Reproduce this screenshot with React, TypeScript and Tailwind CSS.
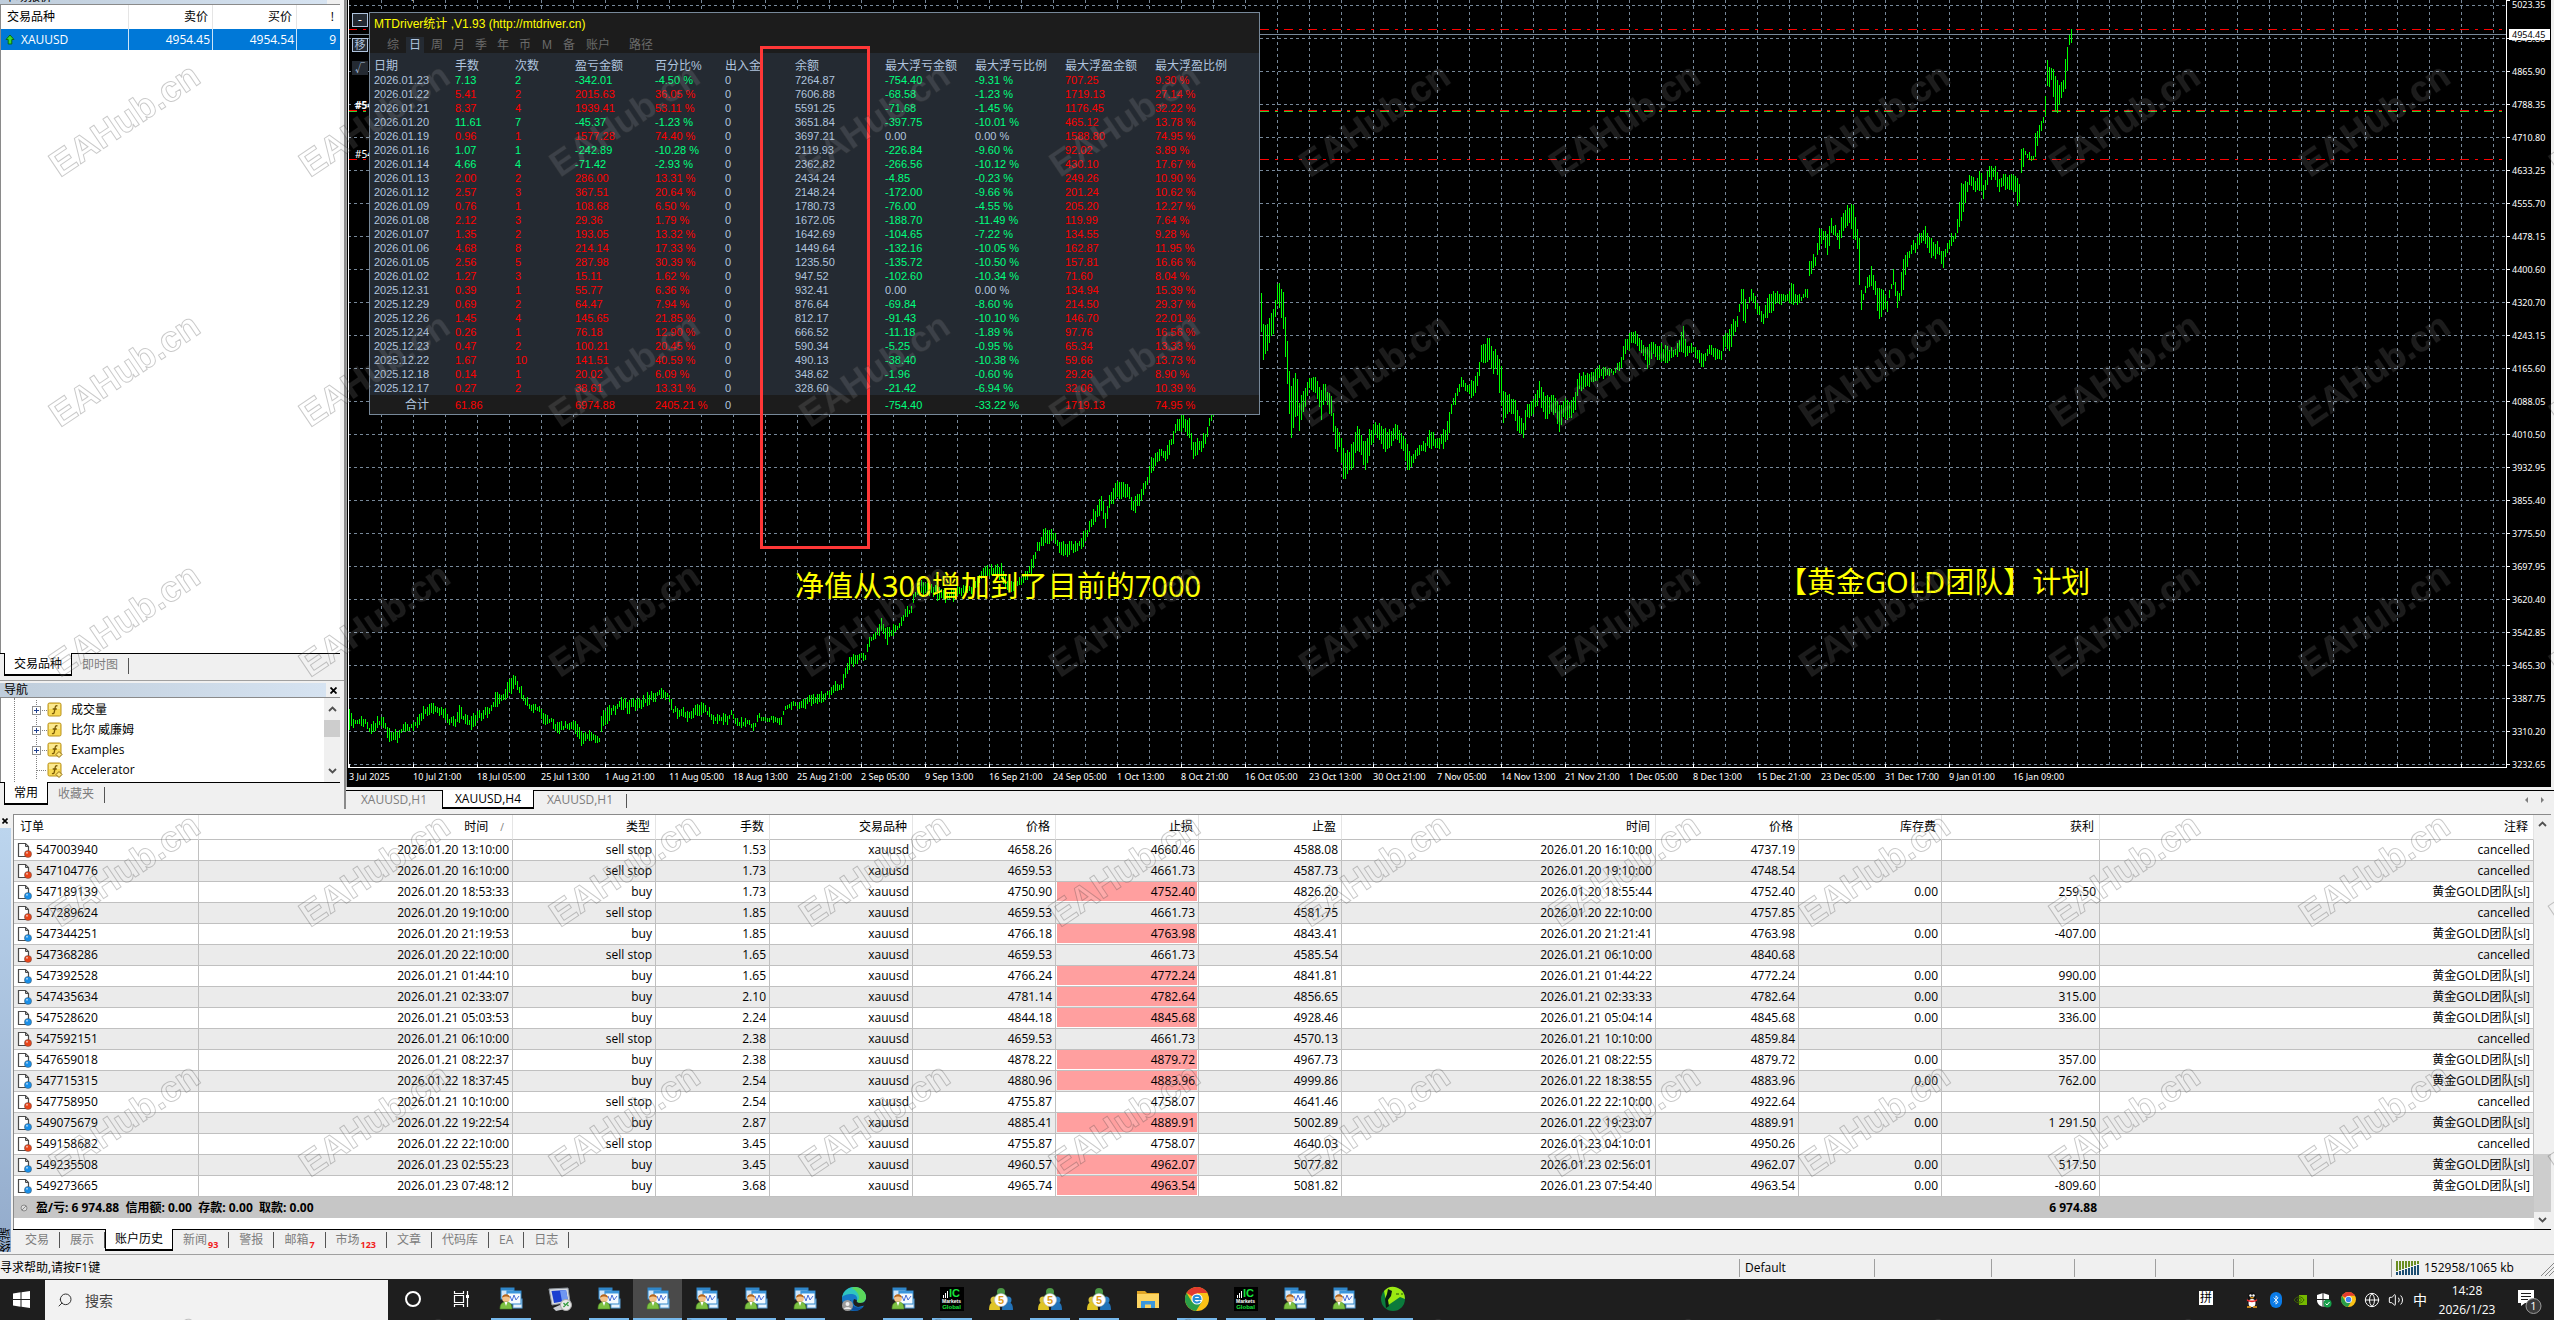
import React, { useState } from 'react';
import clsx from 'clsx';
import { Search, Volume2, Globe, Bluetooth } from 'lucide-react';

const UI_FONT = "font-['Open_Sans','Noto_Sans_CJK_SC',sans-serif]";
const CHART_FONT = "font-['Noto_Sans','Noto_Sans_CJK_SC',sans-serif]";
const STAT_FONT = "font-['Liberation_Sans','Noto_Sans_CJK_SC',sans-serif]";

type StatRow = [string, string, string, string, string, string, string, string, string, string];

// date, lots, trades, profit, profit %, balance, max floating loss, %, max floating profit, %
const STAT_ROWS: StatRow[] = [
  ['2026.01.23', '7.13', '2', '-342.01', '-4.50', '7264.87', '-754.40', '-9.31', '707.25', '9.30'],
  ['2026.01.22', '5.41', '2', '2015.63', '36.05', '7606.88', '-68.58', '-1.23', '1719.13', '27.14'],
  ['2026.01.21', '8.37', '4', '1939.41', '53.11', '5591.25', '-71.68', '-1.45', '1176.45', '32.22'],
  ['2026.01.20', '11.61', '7', '-45.37', '-1.23', '3651.84', '-397.75', '-10.01', '465.12', '13.78'],
  ['2026.01.19', '0.96', '1', '1577.28', '74.40', '3697.21', '0.00', '0.00', '1588.80', '74.95'],
  ['2026.01.16', '1.07', '1', '-242.89', '-10.28', '2119.93', '-226.84', '-9.60', '92.02', '3.89'],
  ['2026.01.14', '4.66', '4', '-71.42', '-2.93', '2362.82', '-266.56', '-10.12', '430.10', '17.67'],
  ['2026.01.13', '2.00', '2', '286.00', '13.31', '2434.24', '-4.85', '-0.23', '249.26', '10.90'],
  ['2026.01.12', '2.57', '3', '367.51', '20.64', '2148.24', '-172.00', '-9.66', '201.24', '10.62'],
  ['2026.01.09', '0.76', '1', '108.68', '6.50', '1780.73', '-76.00', '-4.55', '205.20', '12.27'],
  ['2026.01.08', '2.12', '3', '29.36', '1.79', '1672.05', '-188.70', '-11.49', '119.99', '7.64'],
  ['2026.01.07', '1.35', '2', '193.05', '13.32', '1642.69', '-104.65', '-7.22', '134.55', '9.28'],
  ['2026.01.06', '4.68', '8', '214.14', '17.33', '1449.64', '-132.16', '-10.05', '162.87', '11.95'],
  ['2026.01.05', '2.56', '5', '287.98', '30.39', '1235.50', '-135.72', '-10.50', '157.81', '16.66'],
  ['2026.01.02', '1.27', '3', '15.11', '1.62', '947.52', '-102.60', '-10.34', '71.60', '8.04'],
  ['2025.12.31', '0.39', '1', '55.77', '6.36', '932.41', '0.00', '0.00', '134.94', '15.39'],
  ['2025.12.29', '0.69', '2', '64.47', '7.94', '876.64', '-69.84', '-8.60', '214.50', '29.37'],
  ['2025.12.26', '1.45', '4', '145.65', '21.85', '812.17', '-91.43', '-10.10', '146.70', '22.01'],
  ['2025.12.24', '0.26', '1', '76.18', '12.90', '666.52', '-11.18', '-1.89', '97.76', '16.56'],
  ['2025.12.23', '0.47', '2', '100.21', '20.45', '590.34', '-5.25', '-0.95', '65.34', '13.33'],
  ['2025.12.22', '1.67', '10', '141.51', '40.59', '490.13', '-38.40', '-10.38', '59.66', '13.73'],
  ['2025.12.18', '0.14', '1', '20.02', '6.09', '348.62', '-1.96', '-0.60', '29.26', '8.90'],
  ['2025.12.17', '0.27', '2', '38.61', '13.31', '328.60', '-21.42', '-6.94', '32.06', '10.39'],
];

const STAT_HEADERS = ['日期', '手数', '次数', '盈亏金额', '百分比%', '出入金', '余额', '最大浮亏金额', '最大浮亏比例', '最大浮盈金额', '最大浮盈比例'];
const STAT_TABS = ['综', '日', '周', '月', '季', '年', '币', 'M', '备'];

interface Order {
  id: string;
  open: string;
  type: 'buy' | 'sell stop';
  lots: string;
  price: string;
  sl: string;
  tp: string;
  close: string;
  closePrice: string;
  profit?: string;
}

const ORDERS: Order[] = [
  { id: '547003940', open: '2026.01.20 13:10:00', type: 'sell stop', lots: '1.53', price: '4658.26', sl: '4660.46', tp: '4588.08', close: '2026.01.20 16:10:00', closePrice: '4737.19' },
  { id: '547104776', open: '2026.01.20 16:10:00', type: 'sell stop', lots: '1.73', price: '4659.53', sl: '4661.73', tp: '4587.73', close: '2026.01.20 19:10:00', closePrice: '4748.54' },
  { id: '547189139', open: '2026.01.20 18:53:33', type: 'buy', lots: '1.73', price: '4750.90', sl: '4752.40', tp: '4826.20', close: '2026.01.20 18:55:44', closePrice: '4752.40', profit: '259.50' },
  { id: '547289624', open: '2026.01.20 19:10:00', type: 'sell stop', lots: '1.85', price: '4659.53', sl: '4661.73', tp: '4581.75', close: '2026.01.20 22:10:00', closePrice: '4757.85' },
  { id: '547344251', open: '2026.01.20 21:19:53', type: 'buy', lots: '1.85', price: '4766.18', sl: '4763.98', tp: '4843.41', close: '2026.01.20 21:21:41', closePrice: '4763.98', profit: '-407.00' },
  { id: '547368286', open: '2026.01.20 22:10:00', type: 'sell stop', lots: '1.65', price: '4659.53', sl: '4661.73', tp: '4585.54', close: '2026.01.21 06:10:00', closePrice: '4840.68' },
  { id: '547392528', open: '2026.01.21 01:44:10', type: 'buy', lots: '1.65', price: '4766.24', sl: '4772.24', tp: '4841.81', close: '2026.01.21 01:44:22', closePrice: '4772.24', profit: '990.00' },
  { id: '547435634', open: '2026.01.21 02:33:07', type: 'buy', lots: '2.10', price: '4781.14', sl: '4782.64', tp: '4856.65', close: '2026.01.21 02:33:33', closePrice: '4782.64', profit: '315.00' },
  { id: '547528620', open: '2026.01.21 05:03:53', type: 'buy', lots: '2.24', price: '4844.18', sl: '4845.68', tp: '4928.46', close: '2026.01.21 05:04:14', closePrice: '4845.68', profit: '336.00' },
  { id: '547592151', open: '2026.01.21 06:10:00', type: 'sell stop', lots: '2.38', price: '4659.53', sl: '4661.73', tp: '4570.13', close: '2026.01.21 10:10:00', closePrice: '4859.84' },
  { id: '547659018', open: '2026.01.21 08:22:37', type: 'buy', lots: '2.38', price: '4878.22', sl: '4879.72', tp: '4967.73', close: '2026.01.21 08:22:55', closePrice: '4879.72', profit: '357.00' },
  { id: '547715315', open: '2026.01.22 18:37:45', type: 'buy', lots: '2.54', price: '4880.96', sl: '4883.96', tp: '4999.86', close: '2026.01.22 18:38:55', closePrice: '4883.96', profit: '762.00' },
  { id: '547758950', open: '2026.01.21 10:10:00', type: 'sell stop', lots: '2.54', price: '4755.87', sl: '4758.07', tp: '4641.46', close: '2026.01.22 22:10:00', closePrice: '4922.64' },
  { id: '549075679', open: '2026.01.22 19:22:54', type: 'buy', lots: '2.87', price: '4885.41', sl: '4889.91', tp: '5002.89', close: '2026.01.22 19:23:07', closePrice: '4889.91', profit: '1 291.50' },
  { id: '549158682', open: '2026.01.22 22:10:00', type: 'sell stop', lots: '3.45', price: '4755.87', sl: '4758.07', tp: '4640.03', close: '2026.01.23 04:10:01', closePrice: '4950.26' },
  { id: '549235508', open: '2026.01.23 02:55:23', type: 'buy', lots: '3.45', price: '4960.57', sl: '4962.07', tp: '5077.82', close: '2026.01.23 02:56:01', closePrice: '4962.07', profit: '517.50' },
  { id: '549273665', open: '2026.01.23 07:48:12', type: 'buy', lots: '3.68', price: '4965.74', sl: '4963.54', tp: '5081.82', close: '2026.01.23 07:54:40', closePrice: '4963.54', profit: '-809.60' },
];

const PRICES = ['5023.35', '4945.80', '4865.90', '4788.35', '4710.80', '4633.25', '4555.70', '4478.15', '4400.60', '4320.70', '4243.15', '4165.60', '4088.05', '4010.50', '3932.95', '3855.40', '3775.50', '3697.95', '3620.40', '3542.85', '3465.30', '3387.75', '3310.20', '3232.65'];

const TIMES = ['3 Jul 2025', '10 Jul 21:00', '18 Jul 05:00', '25 Jul 13:00', '1 Aug 21:00', '11 Aug 05:00', '18 Aug 13:00', '25 Aug 21:00', '2 Sep 05:00', '9 Sep 13:00', '16 Sep 21:00', '24 Sep 05:00', '1 Oct 13:00', '8 Oct 21:00', '16 Oct 05:00', '23 Oct 13:00', '30 Oct 21:00', '7 Nov 05:00', '14 Nov 13:00', '21 Nov 21:00', '1 Dec 05:00', '8 Dec 13:00', '15 Dec 21:00', '23 Dec 05:00', '31 Dec 17:00', '9 Jan 01:00', '16 Jan 09:00'];

// x, high, low of the turning points of the price series
const TURNS: [number, number, number][] = [
  [349, 708, 730], [354, 718, 725], [366, 717, 727], [370, 727, 737], [377, 717, 727], [385, 720, 730], [389, 728, 742], [396, 730, 743],
  [403, 723, 732], [412, 723, 730], [417, 717, 727], [423, 708, 718], [432, 703, 713], [438, 710, 718], [444, 707, 717], [449, 717, 727],
  [455, 717, 725], [459, 702, 725], [463, 713, 720], [470, 718, 730], [478, 710, 722], [489, 707, 717], [495, 693, 708], [504, 693, 700],
  [508, 677, 697], [515, 677, 687], [521, 688, 700], [529, 702, 710], [538, 705, 713], [544, 715, 725], [550, 717, 723], [555, 723, 733],
  [564, 723, 732], [572, 718, 727], [578, 723, 738], [582, 733, 748], [588, 730, 740], [599, 735, 743], [602, 708, 730], [613, 705, 715],
  [621, 698, 708], [627, 700, 713], [638, 698, 708], [650, 693, 705], [659, 688, 698], [667, 692, 700], [673, 705, 715], [687, 710, 722],
  [702, 703, 713], [713, 713, 722], [727, 715, 725], [731, 710, 717], [736, 717, 725], [753, 722, 730], [760, 713, 720], [782, 718, 726],
  [784, 702, 710], [799, 702, 710], [811, 695, 705], [825, 692, 700], [834, 683, 692], [841, 683, 692], [845, 667, 682], [851, 655, 667],
  [860, 653, 662], [865, 653, 663], [868, 637, 648], [875, 630, 640], [881, 618, 632], [886, 628, 645], [894, 625, 633], [900, 623, 632],
  [904, 608, 620], [910, 607, 615], [914, 590, 602], [920, 580, 593], [931, 583, 597], [948, 590, 602], [963, 587, 597], [974, 583, 593],
  [980, 570, 580], [989, 565, 578], [1001, 563, 580], [1009, 583, 593], [1023, 577, 585], [1032, 557, 573], [1037, 543, 553], [1045, 527, 543],
  [1055, 533, 543], [1061, 543, 558], [1075, 542, 553], [1086, 530, 543], [1092, 513, 527], [1102, 493, 513], [1105, 510, 527], [1109, 495, 510],
  [1116, 483, 497], [1129, 483, 500], [1132, 500, 516], [1141, 487, 503], [1146, 480, 490], [1150, 460, 477], [1161, 448, 460], [1165, 447, 463],
  [1172, 433, 447], [1176, 417, 430], [1182, 413, 430], [1190, 420, 437], [1192, 443, 462], [1201, 437, 450], [1207, 427, 440], [1210, 410, 423],
  [1225, 370, 390], [1259, 293, 330], [1261, 293, 330], [1263, 323, 360], [1268, 322, 347], [1273, 310, 335], [1278, 280, 300], [1283, 293, 333],
  [1286, 323, 367], [1288, 360, 403], [1291, 383, 437], [1296, 370, 413], [1299, 400, 433], [1304, 390, 410], [1310, 373, 387], [1316, 380, 395],
  [1321, 387, 420], [1324, 382, 397], [1331, 397, 420], [1335, 427, 450], [1339, 430, 450], [1344, 453, 487], [1348, 450, 467], [1352, 443, 473],
  [1356, 427, 450], [1360, 428, 450], [1364, 443, 475], [1368, 432, 457], [1375, 420, 437], [1383, 425, 450], [1388, 430, 450], [1396, 425, 440],
  [1403, 437, 452], [1407, 440, 468], [1411, 457, 469], [1416, 445, 457], [1424, 442, 453], [1429, 430, 447], [1436, 437, 450], [1444, 430, 447],
  [1448, 417, 440], [1451, 403, 413], [1457, 387, 400], [1462, 375, 387], [1468, 383, 397], [1474, 380, 397], [1478, 370, 387], [1480, 348, 367],
  [1489, 335, 360], [1492, 353, 378], [1496, 348, 367], [1501, 363, 410], [1503, 390, 423], [1508, 393, 410], [1515, 400, 420], [1518, 413, 435],
  [1523, 420, 440], [1527, 403, 420], [1533, 400, 413], [1539, 382, 400], [1545, 397, 420], [1554, 397, 413], [1559, 407, 430], [1564, 397, 417],
  [1569, 403, 422], [1574, 393, 413], [1579, 373, 390], [1587, 373, 387], [1597, 365, 380], [1605, 368, 378], [1613, 368, 373], [1620, 357, 373],
  [1625, 340, 357], [1632, 327, 343], [1640, 338, 353], [1647, 347, 368], [1653, 342, 357], [1666, 347, 365], [1674, 347, 357], [1683, 328, 353],
  [1686, 345, 357], [1693, 345, 355], [1702, 353, 367], [1709, 345, 357], [1721, 352, 362], [1723, 333, 350], [1730, 330, 350], [1732, 317, 343],
  [1737, 318, 327], [1741, 289, 303], [1744, 290, 330], [1746, 308, 317], [1750, 290, 300], [1753, 292, 303], [1757, 300, 317], [1763, 315, 323],
  [1767, 297, 317], [1773, 293, 310], [1780, 292, 303], [1787, 295, 303], [1791, 280, 303], [1797, 297, 307], [1803, 293, 300], [1807, 288, 297],
  [1809, 260, 277], [1815, 253, 267], [1819, 228, 250], [1823, 228, 238], [1827, 233, 257], [1831, 217, 237], [1835, 227, 240], [1839, 232, 248],
  [1842, 213, 233], [1849, 205, 223], [1853, 207, 237], [1857, 230, 250], [1859, 240, 287], [1861, 287, 310], [1863, 292, 302], [1867, 277, 288],
  [1871, 267, 287], [1875, 282, 297], [1879, 287, 323], [1883, 290, 310], [1887, 300, 310], [1893, 270, 283], [1897, 287, 307], [1899, 295, 305],
  [1902, 260, 293], [1907, 252, 270], [1910, 245, 255], [1917, 238, 252], [1921, 230, 246], [1925, 227, 243], [1928, 237, 252], [1933, 240, 260],
  [1937, 242, 255], [1943, 252, 267], [1946, 242, 257], [1950, 235, 247], [1954, 235, 245], [1957, 220, 233], [1961, 183, 222], [1967, 183, 193],
  [1970, 172, 185], [1975, 182, 195], [1980, 170, 193], [1983, 183, 197], [1988, 167, 180], [1995, 167, 178], [1998, 177, 192], [2003, 174, 190],
  [2009, 175, 188], [2015, 177, 192], [2018, 177, 212], [2020, 185, 193], [2021, 147, 175], [2025, 152, 158], [2034, 152, 160], [2035, 135, 157],
  [2040, 120, 135], [2044, 113, 123], [2046, 82, 117], [2047, 62, 88], [2051, 65, 83], [2056, 77, 118], [2058, 85, 112], [2060, 85, 97],
  [2063, 78, 95], [2066, 50, 88], [2068, 38, 53], [2070, 29, 45], [2072, 30, 42],
];

const buildBars = (): string => {
  let path = '';
  let i = 0;
  let seed = 7;
  for (let x = 349; x <= 2071; x += 2) {
    while (i < TURNS.length - 2 && TURNS[i + 1][0] < x) i++;
    const [x0, h0, l0] = TURNS[i];
    const [x1, h1, l1] = TURNS[i + 1];
    const t = Math.min(1, Math.max(0, (x - x0) / (x1 - x0)));
    seed = (seed * 16807) % 2147483647;
    const a = (seed % 100) / 100;
    const b = ((seed >> 8) % 100) / 100;
    const high = Math.round(h0 + (h1 - h0) * t + a * 6 - 2);
    const low = Math.round(l0 + (l1 - l0) * t + b * 6 - 4);
    path += `M${x}.5 ${high}V${Math.max(low, high + 4)}`;
  }
  return path;
};

const BARS = buildBars();

const ChartDrawing: React.FC = () => (
  <svg viewBox="347 0 2160 768" preserveAspectRatio="none" shapeRendering="crispEdges" className="block w-full h-[768px]">
    <g stroke="#778899" strokeDasharray="3 3">
      {Array.from({ length: 24 }, (_, k) => (
        <line key={`h${k}`} x1="348" x2="2506" y1={5.5 + 33 * k} y2={5.5 + 33 * k} />
      ))}
      {Array.from({ length: 67 }, (_, k) => (
        <line key={`v${k}`} x1={381.5 + 32 * k} x2={381.5 + 32 * k} y1="0" y2="767" />
      ))}
    </g>
    <line x1="348" x2="2506" y1="34.5" y2="34.5" stroke="#778899" />
    <g stroke="#ff0000" strokeDasharray="9 6 3 6">
      <line x1="348" x2="2506" y1="29.5" y2="29.5" />
      <line x1="348" x2="2506" y1="110.5" y2="110.5" />
      <line x1="348" x2="2506" y1="159.5" y2="159.5" />
      <line x1="348" x2="2506" y1="111.5" y2="111.5" stroke="#32cd32" />
    </g>
    <path d={BARS} stroke="#00ff00" />
    <path d="M348.5 0V767.5H2506.5V0" fill="none" stroke="#ffffff" />
    {Array.from({ length: 34 }, (_, k) => (
      <line key={k} x1={349.5 + 64 * k} x2={349.5 + 64 * k} y1="764" y2="768" stroke="#ffffff" />
    ))}
  </svg>
);

const tone = (value: string): string => {
  if (value.startsWith('-')) return 'text-[#00ff7f]';
  if (value === '0.00') return 'text-[#b0c4de]';
  return 'text-[#ff0000]';
};

const StatsPanel: React.FC = () => {
  const [tab, setTab] = useState<string>('日');

  return (
    <section className={clsx('absolute left-[22px] top-[12px] w-[891px] border border-[#778899] bg-[#242a32] text-[#b0c4de]', STAT_FONT)}>
      <div className="bg-[#1c1c1c]">
        <h2 className="h-6 pl-1 pt-[3px] text-[12px] leading-4 text-[#ffff00]">MTDriver统计 ,V1.93 (http://mtdriver.cn)</h2>
        <div className="flex pl-[14px] text-[12px] leading-4 text-[#6a6a6a]">
          {STAT_TABS.map(name => (
            <button
              key={name}
              onClick={() => setTab(name)}
              className={clsx('w-[18px] mr-1 h-4', tab === name && 'bg-[#242a32] text-[#b0c4de]')}
            >
              {name}
            </button>
          ))}
          <button className="ml-[4px] w-6">账户</button>
          <button className="ml-[19px] w-6">路径</button>
        </div>
      </div>
      <table className="w-full table-fixed border-separate border-spacing-0 text-left text-[11px] leading-[14px] whitespace-nowrap">
        <colgroup>
          <col className="w-[85px]" />
          <col className="w-[60px]" />
          <col className="w-[60px]" />
          <col className="w-[80px]" />
          <col className="w-[70px]" />
          <col className="w-[70px]" />
          <col className="w-[90px]" />
          <col className="w-[90px]" />
          <col className="w-[90px]" />
          <col className="w-[90px]" />
          <col />
        </colgroup>
        <thead>
          <tr className="h-5 align-bottom text-[12px]">
            {STAT_HEADERS.map((name, i) => (
              <th key={name} className={clsx('p-0 font-normal', i === 0 && 'pl-1')}>{name}</th>
            ))}
          </tr>
        </thead>
        <tbody>
          {STAT_ROWS.map(row => (
            <tr key={row[0]} className="h-[14px]">
              <td className="p-0 pl-1">{row[0]}</td>
              <td className={clsx('p-0', tone(row[3]))}>{row[1]}</td>
              <td className={clsx('p-0', tone(row[3]))}>{row[2]}</td>
              <td className={clsx('p-0', tone(row[3]))}>{row[3]}</td>
              <td className={clsx('p-0', tone(row[3]))}>{row[4]} %</td>
              <td className="p-0">0</td>
              <td className="p-0">{row[5]}</td>
              <td className={clsx('p-0', tone(row[6]))}>{row[6]}</td>
              <td className={clsx('p-0', tone(row[6]))}>{row[7]} %</td>
              <td className="p-0 text-[#ff0000]">{row[8]}</td>
              <td className="p-0 text-[#ff0000]">{row[9]} %</td>
            </tr>
          ))}
        </tbody>
        <tfoot>
          <tr className="h-[19px] bg-[#1c1c1c] text-[#ff0000]">
            <td className="p-0 pl-[35px] text-[12px] text-[#b0c4de]">合计</td>
            <td className="p-0">61.86</td>
            <td className="p-0" />
            <td className="p-0">6974.88</td>
            <td className="p-0">2405.21 %</td>
            <td className="p-0 text-[#b0c4de]">0</td>
            <td className="p-0" />
            <td className="p-0 text-[#00ff7f]">-754.40</td>
            <td className="p-0 text-[#00ff7f]">-33.22 %</td>
            <td className="p-0">1719.13</td>
            <td className="p-0">74.95 %</td>
          </tr>
        </tfoot>
      </table>
    </section>
  );
};

const ChartWindow: React.FC = () => (
  <main className={clsx('flex-1 min-w-0 flex flex-col', CHART_FONT)}>
    <div className="relative flex overflow-hidden bg-black mr-[3px] border-l border-[#a0a0a0] text-white">
      <div className="flex-1 min-w-0">
        <ChartDrawing />
        <div className="flex h-[19px] overflow-hidden pl-[2px] pt-px text-[9px] leading-4 whitespace-nowrap">
          {TIMES.map(t => (
            <span key={t} className="w-16 shrink-0">{t}</span>
          ))}
        </div>
      </div>
      <div className="w-[44px] text-[9px] leading-[10px]">
        {PRICES.map((p, i) => (
          <div key={p} className={clsx('relative flex pl-[5px]', i === 0 ? 'h-[22px] items-start' : 'h-[33px] items-center')}>
            <span className="absolute left-0 w-[3px] border-t border-white" />
            {p}
            {i === 1 && <span className="absolute left-[2px] top-[7px] w-[41px] pl-[3px] bg-white text-black leading-[11px]">4954.45</span>}
          </div>
        ))}
      </div>

      <div className="absolute left-[7px] -top-3 flex gap-[5px] text-[11px] leading-4">
        <span className="text-[9px]">▼</span>
        <span>XAUUSD,H4&nbsp; 4955.55 4967.24 4950.06 4954.45</span>
      </div>
      <button aria-label="收起" className="absolute left-[5px] top-[13px] w-4 h-[14px] border border-[#b0c4de] bg-[#242a32] text-[12px] leading-[10px] text-white">-</button>
      <button className="absolute left-[5px] top-[38px] w-4 h-[14px] border border-[#b0c4de] bg-[#242a32] text-[11px] leading-[12px] text-[#b0c4de]">移</button>
      <button className="absolute left-[5px] top-[61px] w-4 h-[14px] bg-[#242a32] text-[10px] leading-[14px] text-[#b0c4de]">√</button>
      <span className="absolute left-[8px] top-[98px] text-[10px] font-bold leading-[14px]">#54</span>
      <span className="absolute left-[8px] top-[147px] text-[10px] leading-[14px]">#54</span>

      <StatsPanel />
      <div className="absolute left-[413px] top-[46px] w-[110px] h-[503px] border-[3px] border-[#ff3737]" />
      <p className="absolute left-[448px] top-[566px] text-[29px] leading-10 text-[#ffff00] whitespace-nowrap">净值从300增加到了目前的7000</p>
      <p className="absolute left-[1431px] top-[562px] text-[29px] leading-10 text-[#ffff00] whitespace-nowrap">【黄金GOLD团队】计划</p>
    </div>

    <nav className={clsx('flex items-start justify-between h-[22px] pt-[3px] bg-[#f0f0f0] text-[12px] leading-[18px] text-[#7d7d7d]', UI_FONT)}>
      <div className="flex flex-1 h-[19px] border-t border-black">
        <button className="w-[96px] text-center">XAUUSD,H1</button>
        <button className="-mt-px w-[92px] border-x border-b-2 border-black bg-white text-black text-center">XAUUSD,H4</button>
        <button className="w-[92px] text-center">XAUUSD,H1</button>
        <span className="mt-[3px] h-[14px] border-l border-[#555]" />
      </div>
      <div className="flex h-[19px] items-center gap-[11px] border-t border-black pr-2 text-[#7d7d7d]">
        <svg width="6" height="8" viewBox="0 0 6 8"><path d="M5 1V7L2 4Z" fill="currentColor" /></svg>
        <svg width="6" height="8" viewBox="0 0 6 8"><path d="M1 1V7L4 4Z" fill="currentColor" /></svg>
      </div>
    </nav>
  </main>
);

const FunctionIcon: React.FC<{ custom?: boolean }> = ({ custom }) => (
  <svg width="16" height="16" viewBox="0 0 16 16">
    <rect x="1" y="1" width="13" height="13" rx="1.5" fill="#f7d955" stroke="#b8901c" />
    <rect x="2" y="2" width="11" height="5" fill="#fdf0a8" opacity=".7" />
    <path d="M10.5 4C8.500 3 8.300 5 8 6.500L7.300 10C7 11.500 6.300 12 5 11.400M5.700 7H9.800" fill="none" stroke="#7a5a05" strokeWidth="1.300" />
    {custom && <path d="M12 9.500L15 12.500L12 15.500L9 12.500Z" fill="#ffe680" stroke="#8d6c10" />}
  </svg>
);

const Chevron: React.FC<{ down?: boolean }> = ({ down }) => (
  <svg width="9" height="6" viewBox="0 0 9 6" className="block">
    <path d={down ? 'M1 1L4.500 4.500L8 1' : 'M1 5L4.500 1.500L8 5'} fill="none" stroke="#505050" strokeWidth="1.800" />
  </svg>
);

const TREE = [
  { name: '成交量', custom: false, node: true },
  { name: '比尔 威廉姆', custom: false, node: true },
  { name: 'Examples', custom: true, node: true },
  { name: 'Accelerator', custom: true, node: false },
];

const Sidebar: React.FC = () => (
  <aside className="w-[346px] shrink-0 flex flex-col bg-[#f0f0f0] border-r-2 border-[#8a8a8a] text-[12px]">
    <section className="flex-1 flex flex-col pr-[4px]">
      <div className="flex h-1 overflow-hidden items-end mr-[13px] bg-linear-to-r from-[#bfcddb] to-[#d6e3f1] pl-1 leading-[14px]">市场报价</div>
      <div className="flex-1 border-l border-t border-[#8a8a8a] bg-white">
        <table className="w-full table-fixed border-separate border-spacing-0 text-right">
          <colgroup>
            <col className="w-[128px]" />
            <col className="w-[84px]" />
            <col className="w-[84px]" />
            <col />
          </colgroup>
          <thead>
            <tr className="h-6">
              <th className="border-r border-[#e5e5e5] p-0 pl-1.5 text-left font-normal">交易品种</th>
              <th className="border-r border-[#e5e5e5] p-0 pr-1 font-normal">卖价</th>
              <th className="border-r border-[#e5e5e5] p-0 pr-1 font-normal">买价</th>
              <th className="p-0 pr-1.5 font-normal">!</th>
            </tr>
          </thead>
          <tbody>
            <tr className="h-[21px] bg-[#0078d7] text-white">
              <td className="border-r border-[#cce4f7] p-0 pl-1">
                <div className="flex items-center gap-1.5">
                  <svg width="10" height="11" viewBox="0 0 10 11"><path d="M5 1L9 5.500H6.800V10H3.200V5.500H1Z" fill="#3ddc2e" stroke="#0b6a12" /></svg>
                  XAUUSD
                </div>
              </td>
              <td className="border-r border-[#cce4f7] p-0 pr-0.5">4954.45</td>
              <td className="border-r border-[#cce4f7] p-0 pr-0.5">4954.54</td>
              <td className="p-0 pr-1">9</td>
            </tr>
          </tbody>
        </table>
      </div>
      <nav className="flex h-[27px] items-start border-t border-black pl-1 text-[#7d7d7d]">
        <button className="-mt-px h-[23px] w-[68px] border-x border-b-2 border-black bg-white text-black">交易品种</button>
        <button className="h-[22px] w-[56px]">即时图</button>
        <span className="mt-1 h-4 border-l border-[#555]" />
      </nav>
    </section>

    <section className="border-t border-[#a0a0a0] pt-[2px] pr-[4px]">
      <div className="flex items-center">
        <h2 className="flex-1 pl-1 bg-linear-to-r from-[#bfcddb] to-[#d6e3f1] leading-[14px]">导航</h2>
        <button aria-label="关闭" className="flex w-[14px] justify-center">
          <svg width="7" height="7" viewBox="0 0 7 7"><path d="M.5 .5L6.500 6.500M6.500 .5L.5 6.500" stroke="#000" strokeWidth="1.800" /></svg>
        </button>
      </div>
      <div className="flex border-l border-t border-[#8a8a8a] bg-white">
        <div className="flex-1 ml-[13px] border-l border-dotted border-[#808080] py-[2px]">
          {TREE.map(item => (
            <div key={item.name} className="flex h-5 items-center">
              <svg width="32" height="20" viewBox="0 0 32 20">
                <path d={item.node ? 'M21.500 0V20M27 10.500H32' : 'M21.500 0V20M22 10.500H32'} stroke="#808080" strokeDasharray="1 1" />
                {item.node && (
                  <>
                    <rect x="17.500" y="6.500" width="8" height="8" fill="#fff" stroke="#919191" />
                    <path d="M19 10.500H24M21.500 8V13" stroke="#1f3f8f" />
                  </>
                )}
              </svg>
              <FunctionIcon custom={item.custom} />
              <span className="pl-2">{item.name}</span>
            </div>
          ))}
        </div>
        <div className="flex w-4 flex-col items-center bg-[#f0f0f0] py-2">
          <Chevron />
          <div className="mt-[8px] h-[17px] w-full bg-[#cdcdcd]" />
          <div className="flex-1" />
          <Chevron down />
        </div>
      </div>
      <nav className="flex h-[27px] items-start border-t border-black pl-1 text-[#7d7d7d]">
        <button className="-mt-px h-[23px] w-[44px] border-x border-b-2 border-black bg-white text-black">常用</button>
        <button className="h-[22px] w-[56px]">收藏夹</button>
        <span className="mt-1 h-4 border-l border-[#555]" />
      </nav>
    </section>
  </aside>
);

const DocIcon: React.FC<{ color: string }> = ({ color }) => (
  <svg width="15" height="16" viewBox="0 0 15 16" className="shrink-0">
    <path d="M1.500 1.500H8.500L11.500 4.500V14.500H1.500Z" fill="#fff" stroke="#4a4a4a" strokeWidth="1.200" />
    <path d="M8.500 1.500V4.500H11.500" fill="none" stroke="#4a4a4a" />
    <circle cx="11" cy="12" r="3.600" fill={color} stroke="#444" strokeWidth=".4" />
    <circle cx="10" cy="10.800" r="1" fill="#fff" opacity=".6" />
  </svg>
);

const ORDER_HEADERS = ['类型', '手数', '交易品种', '价格', '止损', '止盈', '时间', '价格', '库存费', '获利', '注释'];
const TERMINAL_TABS = [
  { name: '交易' },
  { name: '展示' },
  { name: '账户历史' },
  { name: '新闻', count: '93' },
  { name: '警报' },
  { name: '邮箱', count: '7' },
  { name: '市场', count: '123' },
  { name: '文章' },
  { name: '代码库' },
  { name: 'EA' },
  { name: '日志' },
];

const CELL = 'border-r border-b border-[#c0c0c0] p-0 pr-[3px]';

const Terminal: React.FC = () => {
  const [tab, setTab] = useState<string>('账户历史');

  return (
    <section className="flex flex-1 bg-[#f0f0f0] pt-[5px] pr-[3px] text-[12px] leading-[18px]">
      <div className="flex w-[13px] shrink-0 flex-col">
        <button aria-label="关闭" className="flex h-[14px] w-[10px] items-center justify-center">
          <svg width="6" height="6" viewBox="0 0 6 6"><path d="M.5 .5L5.500 5.500M5.500 .5L.5 5.500" stroke="#000" strokeWidth="1.600" /></svg>
        </button>
        <div className="flex mr-[2px] mb-[2px] flex-1 items-end justify-center bg-linear-to-b from-[#bcd5ee] to-[#93abcb]">
          <h2 className="-rotate-180 [writing-mode:vertical-rl] text-[12px] leading-[11px]">终端</h2>
        </div>
      </div>
      <div className="flex-1 min-w-0">
        <div className="flex border-l border-t border-[#8a8a8a] bg-white">
          <table className="flex-1 table-fixed border-separate border-spacing-0 mb-[11px] w-full text-right whitespace-nowrap">
            <colgroup>
              <col className="w-[185px]" />
              <col className="w-[314px]" />
              <col className="w-[143px]" />
              <col className="w-[114px]" />
              <col className="w-[143px]" />
              <col className="w-[143px]" />
              <col className="w-[143px]" />
              <col className="w-[143px]" />
              <col className="w-[314px]" />
              <col className="w-[143px]" />
              <col className="w-[143px]" />
              <col className="w-[158px]" />
              <col />
            </colgroup>
            <thead>
              <tr className="h-[25px]">
                <th className="border-r border-b border-r-[#e5e5e5] border-b-[#c0c0c0] p-0 pl-1.5 text-left font-normal">订单</th>
                <th className="border-r border-b border-r-[#e5e5e5] border-b-[#c0c0c0] p-0 pr-2 font-normal">
                  时间<span className="pl-3 text-[10px] text-[#777]">/</span>
                </th>
                {ORDER_HEADERS.map((name, i) => (
                  <th key={i} className="border-r border-b border-r-[#e5e5e5] border-b-[#c0c0c0] p-0 pr-[5px] font-normal">{name}</th>
                ))}
              </tr>
            </thead>
            <tbody>
              {ORDERS.map(order => (
                <tr key={order.id} className="h-[21px] odd:bg-white even:bg-[#ebebeb]">
                  <td className={CELL}>
                    <div className="flex items-center gap-1 pl-[3px]">
                      <DocIcon color={order.type === 'buy' ? '#1a8fe8' : '#e8451a'} />
                      {order.id}
                    </div>
                  </td>
                  <td className={CELL}>{order.open}</td>
                  <td className={CELL}>{order.type}</td>
                  <td className={CELL}>{order.lots}</td>
                  <td className={CELL}>xauusd</td>
                  <td className={CELL}>{order.price}</td>
                  <td className="border-r border-b border-[#c0c0c0] p-0 px-px">
                    <div className={clsx('mb-px h-[19px] pr-[2px] leading-5', order.profit && 'bg-[#ff9f9f]')}>{order.sl}</div>
                  </td>
                  <td className={CELL}>{order.tp}</td>
                  <td className={CELL}>{order.close}</td>
                  <td className={CELL}>{order.closePrice}</td>
                  <td className={CELL}>{order.profit && '0.00'}</td>
                  <td className={CELL}>{order.profit}</td>
                  <td className={CELL}>{order.profit ? '黄金GOLD团队[sl]' : 'cancelled'}</td>
                </tr>
              ))}
            </tbody>
            <tfoot>
              <tr className="h-[21px] bg-[#c6c6c6] font-bold">
                <td colSpan={11} className="p-0 pl-1.5 text-left">
                  <div className="flex items-center gap-[8px]">
                    <svg width="8" height="8" viewBox="0 0 8 8"><circle cx="4" cy="4" r="3" fill="#ddd" stroke="#8a8a8a" /><path d="M2 6L6 2" stroke="#8a8a8a" /></svg>
                    <span>盈/亏: 6 974.88&nbsp; 信用额: 0.00&nbsp; 存款: 0.00&nbsp; 取款: 0.00</span>
                  </div>
                </td>
                <td className="p-0 pr-[3px]">6 974.88</td>
                <td className="p-0" />
              </tr>
            </tfoot>
          </table>
          <div className="flex w-[17px] shrink-0 flex-col items-center bg-[#f0f0f0] py-[6px]">
            <Chevron />
            <div className="flex-1" />
            <div className="mb-[5px] h-[58px] w-full bg-[#cdcdcd]" />
            <Chevron down />
          </div>
        </div>
        <nav className="flex h-[23px] items-start border-t border-black pl-[2px] text-[#7d7d7d]">
          {TERMINAL_TABS.map(item =>
            item.name === tab ? (
              <button key={item.name} className="-mt-px h-[22px] border-x border-b-2 border-black bg-white px-[9px] text-black">{item.name}</button>
            ) : (
              <button key={item.name} onClick={() => setTab(item.name)} className="relative mt-[2px] h-4 border-r border-[#555] px-[10px] leading-[14px] whitespace-nowrap last:pr-[10px]">
                {item.name}
                {item.count && <span className="relative top-1 pl-px text-[9px] font-bold text-[#f02020]">{item.count}</span>}
              </button>
            )
          )}
        </nav>
      </div>
    </section>
  );
};

const StatusBar: React.FC = () => (
  <footer className="flex h-[25px] items-center border-t border-[#a0a0a0] bg-[#f0f0f0] pt-[2px] text-[12px]">
    <span className="flex-1">寻求帮助,请按F1键</span>
    <span className="w-[135px] border-l border-[#a0a0a0] pl-[5px]">Default</span>
    <span className="h-[18px] w-[117px] border-l border-[#a0a0a0]" />
    <span className="h-[18px] w-[83px] border-l border-[#a0a0a0]" />
    <span className="h-[18px] w-[81px] border-l border-[#a0a0a0]" />
    <span className="h-[18px] w-[78px] border-l border-[#a0a0a0]" />
    <span className="h-[18px] w-[80px] border-l border-[#a0a0a0]" />
    <span className="h-[18px] w-[78px] border-l border-[#a0a0a0]" />
    <span className="flex w-[149px] items-center gap-1 border-l border-[#a0a0a0] pl-1">
      <svg width="24" height="14" viewBox="0 0 24 14">
        {Array.from({ length: 8 }, (_, i) => (
          <g key={i}>
            <rect x={i * 3} y="0" width="2" height={10 - i} fill="#6b8e23" />
            <rect x={i * 3} y={11 - i} width="2" height={3 + i} fill="#1d4f73" />
          </g>
        ))}
      </svg>
      152958/1065 kb
    </span>
    <svg width="14" height="16" viewBox="0 0 14 16"><path d="M1 16L14 3M5 16L14 7M9 16L14 11" stroke="#888" /></svg>
  </footer>
);

const MetaTraderIcon: React.FC = () => (
  <svg width="24" height="24" viewBox="0 0 24 24">
    <rect x="2" y="1" width="13" height="11" fill="#cfe6fa" stroke="#2f86c9" />
    <rect x="2" y="1" width="13" height="2.500" fill="#2f86c9" />
    <rect x="14" y="12" width="9" height="9" fill="#e6f2fc" stroke="#5aa0d8" />
    <rect x="8" y="4" width="14" height="13" fill="#f4faff" stroke="#2f86c9" />
    <rect x="8" y="4" width="14" height="2.500" fill="#3c96dc" />
    <path d="M11 9L13 14L15 8L17 13L20 9" fill="none" stroke="#4a6fd8" />
    <circle cx="7" cy="11.500" r="3.800" fill="#f5c38a" />
    <path d="M3 11C3 6 11 6 11 11C9 9 5 9 3 11Z" fill="#b5651d" />
    <path d="M1 22C1 16.500 3.500 15 7 15C10.500 15 13 16.500 13 22Z" fill="#7cc142" stroke="#4c8a22" strokeWidth=".6" />
    <path d="M5.500 15L7 19L8.500 15Z" fill="#fff" />
  </svg>
);

const RemoteIcon: React.FC = () => (
  <svg width="24" height="24" viewBox="0 0 24 24">
    <path d="M1 2L20 1L22 15L4 18Z" fill="#d7dbe0" stroke="#8d949c" />
    <path d="M3.500 4L18 3L20 13.500L6 16Z" fill="#1b3fd0" />
    <path d="M12 3.500L18 3L20 13.500L14 14.500Z" fill="#6f97f2" />
    <path d="M5 21L12 18L17 22L8 24Z" fill="#c9cdd2" />
    <circle cx="18" cy="18" r="5.500" fill="#e9e9e9" stroke="#a9a9a9" />
    <path d="M15.500 16L17.500 18L15.500 20M20.500 15L18.500 17L20.500 19" fill="none" stroke="#2f9a3c" strokeWidth="1.300" />
  </svg>
);

const EdgeIcon: React.FC = () => (
  <svg width="26" height="26" viewBox="0 0 26 26">
    <circle cx="13" cy="13" r="12" fill="#1679c9" />
    <path d="M1 12C2 5 7 1 13 1C20 1 25 6 25 11C25 15 22 17 19 17C16 17 15 15.500 16 14C17 12 15 8 11 8C6 8 2 9 1 12Z" fill="#2fc5c0" />
    <path d="M14 1C20 1 25 6 25 11C25 15 22 17 19 17C17 17 16 16 16 15C20 13 18 5 10 2Z" fill="#5bd75b" />
    <path d="M16 14C15 15.500 16 17 19 17C22 17 24 16 25 13L26 19L17 21C13 20 11 17 13 13Z" fill="#1e1e1e" />
    <path d="M10 14C10 20 15 23 22 21C19 25 13 26 9 23C5 20 6 15 10 14Z" fill="#0c4f9e" />
    <circle cx="6.500" cy="19.500" r="5.500" fill="#9b9b9b" />
    <circle cx="6.500" cy="18" r="2" fill="#eee" />
    <path d="M3 23C3 20.500 10 20.500 10 23Z" fill="#eee" />
  </svg>
);

const IcMarketsIcon: React.FC = () => (
  <div className="flex h-6 w-6 flex-col items-center bg-black font-['Liberation_Sans',sans-serif] font-bold">
    <div className="flex h-[11px] items-end gap-px">
      <span className="h-[3px] w-px bg-white" />
      <span className="h-[5px] w-px bg-white" />
      <span className="h-[7px] w-px bg-white" />
      <span className="text-[11px] leading-[10px] text-[#17e63b]">IC</span>
    </div>
    <span className="text-[5px] leading-[6px] text-white">Markets</span>
    <span className="text-[6px] leading-[6px] text-[#17e63b]">Global</span>
  </div>
);

const Mt5Icon: React.FC = () => (
  <svg width="26" height="26" viewBox="0 0 26 26">
    <circle cx="13" cy="6" r="4" fill="#4d9a47" />
    <path d="M6 16C6 9 9 7 13 7C17 7 20 9 20 16Z" fill="#3f8f3c" />
    <circle cx="6" cy="14" r="3.500" fill="#d8c43a" />
    <path d="M1 24C1 18 3 16 7 16C10 16 12 18 12 24Z" fill="#e0c526" />
    <circle cx="20" cy="14" r="3.500" fill="#2b7fc4" />
    <path d="M14 24C14 18 16 16 19 16C23 16 25 18 25 24Z" fill="#2272b8" />
    <circle cx="13" cy="14" r="6.500" fill="#fff" stroke="#b9b9b9" strokeWidth=".6" />
    <text x="13" y="18" textAnchor="middle" fontSize="11" fontWeight="bold" fill="#e09a1a" fontFamily="Liberation Sans, sans-serif">5</text>
  </svg>
);

const FolderIcon: React.FC = () => (
  <svg width="24" height="24" viewBox="0 0 24 24">
    <path d="M1 4H9L11 6H23V21H1Z" fill="#e0a526" />
    <rect x="1" y="7" width="22" height="14" fill="#fcd462" />
    <path d="M5 21V14H19V21H15V17.500H9V21Z" fill="#3b97dd" />
  </svg>
);

const ChromeIcon: React.FC<{ size: number; badge?: boolean }> = ({ size, badge }) => (
  <svg width={size} height={size} viewBox="0 0 24 24">
    <circle cx="12" cy="12" r="12" fill="#fbc116" />
    <path d="M12 12L1.600 6A12 12 0 0 1 22.400 6H12Z" fill="#e33b2e" />
    <path d="M12 12L7 15L1.600 6A12 12 0 0 0 11 24L17 14.500Z" fill="#2a9e48" />
    <circle cx="12" cy="12" r="5.600" fill="#fff" />
    {badge ? (
      <path d="M8.500 12H15.500C15.500 7.500 8.500 7.500 8.500 12C8.500 16 13.500 16.500 15 14" fill="none" stroke="#2a8fd6" strokeWidth="2" />
    ) : (
      <circle cx="12" cy="12" r="4.400" fill="#3f83f2" />
    )}
  </svg>
);

const GreenIcon: React.FC = () => (
  <svg width="26" height="26" viewBox="0 0 26 26">
    <circle cx="13" cy="13" r="12" fill="#0b7a3c" />
    <path d="M25 13A12 12 0 0 0 4 5L7 20L20 11Z" fill="#9bea12" />
    <path d="M8 3L12 5L11 10L8 14L9 20L6 22L5 13L7 8Z" fill="#0a1a12" />
    <path d="M16 8H19M21 8H23" stroke="#25500a" />
  </svg>
);

const CortanaIcon: React.FC = () => (
  <svg width="18" height="18" viewBox="0 0 18 18"><circle cx="9" cy="9" r="7" fill="none" stroke="#fff" strokeWidth="2" /></svg>
);

const TaskViewIcon: React.FC = () => (
  <svg width="18" height="18" viewBox="0 0 18 18">
    <path d="M1.500 1V3.500H10.500V1M1.500 17V14.500H10.500V17M1.500 5.500H10.500V12.500H1.500ZM14.500 1V17" fill="none" stroke="#fff" strokeWidth="1.200" />
    <rect x="13" y="5" width="3" height="3" fill="#fff" />
  </svg>
);

const APPS: { label: string; icon: React.ReactNode; open?: boolean; active?: boolean }[] = [
  { label: 'Cortana', icon: <CortanaIcon /> },
  { label: '任务视图', icon: <TaskViewIcon /> },
  { label: 'MetaTrader', icon: <MetaTraderIcon />, open: true },
  { label: '远程桌面', icon: <RemoteIcon /> },
  { label: 'MetaTrader', icon: <MetaTraderIcon />, open: true },
  { label: 'MetaTrader', icon: <MetaTraderIcon />, open: true, active: true },
  { label: 'MetaTrader', icon: <MetaTraderIcon />, open: true },
  { label: 'MetaTrader', icon: <MetaTraderIcon />, open: true },
  { label: 'MetaTrader', icon: <MetaTraderIcon />, open: true },
  { label: 'Edge', icon: <EdgeIcon /> },
  { label: 'MetaTrader', icon: <MetaTraderIcon />, open: true },
  { label: 'IC Markets', icon: <IcMarketsIcon />, open: true },
  { label: 'MetaTrader 5', icon: <Mt5Icon /> },
  { label: 'MetaTrader 5', icon: <Mt5Icon />, open: true },
  { label: 'MetaTrader 5', icon: <Mt5Icon />, open: true },
  { label: '文件夹', icon: <FolderIcon /> },
  { label: 'Chrome', icon: <ChromeIcon size={24} badge />, open: true },
  { label: 'IC Markets', icon: <IcMarketsIcon />, open: true },
  { label: 'MetaTrader', icon: <MetaTraderIcon />, open: true },
  { label: 'MetaTrader', icon: <MetaTraderIcon />, open: true },
  { label: '跑步', icon: <GreenIcon />, open: true },
];

const Taskbar: React.FC = () => (
  <div className="flex h-[41px] shrink-0 items-stretch bg-[#1e1e1e] text-white">
    <button aria-label="开始" className="flex w-[45px] items-center justify-center pr-[3px]">
      <svg width="17" height="17" viewBox="0 0 17 17"><path d="M0 2.400L7.500 1.300V8H0ZM8.500 1.200L17 0V8H8.500ZM0 9H7.500V15.700L0 14.600ZM8.500 9H17V17L8.500 15.800Z" fill="#fff" /></svg>
    </button>
    <label className="mt-px flex w-[343px] items-center gap-3 bg-[#f2f2f2] pl-3 text-[#333]">
      <Search size={16} strokeWidth={1.5} className="-scale-x-100" />
      <input type="text" aria-label="搜索" placeholder="搜索" className="min-w-0 flex-1 bg-transparent text-[14px] outline-none placeholder:text-[#444]" />
    </label>
    {APPS.map((app, i) => (
      <button key={i} aria-label={app.label} className={clsx('flex w-[49px] flex-col items-center', app.active && 'bg-[#4a4a4a]')}>
        <span className="flex flex-1 items-center">{app.icon}</span>
        <span className={clsx('h-[2px]', app.active ? 'w-full' : 'w-10', app.open && 'bg-[#76b9ed]')} />
      </button>
    ))}
    <div className="flex-1" />
    <div className="flex items-center">
      <span className="mr-[27px] mb-1 h-[14px] w-[14px] bg-white text-center text-[12px] leading-[13px] text-black">拼</span>
      <span className="flex w-6 justify-center">
        <svg width="14" height="16" viewBox="0 0 14 16">
          <ellipse cx="7" cy="9.500" rx="5.500" ry="6" fill="#111" stroke="#444" strokeWidth=".4" />
          <ellipse cx="7" cy="4.500" rx="4" ry="4.300" fill="#111" />
          <ellipse cx="7" cy="11" rx="3.500" ry="4" fill="#fff" />
          <circle cx="5.500" cy="3.500" r="1.200" fill="#fff" />
          <circle cx="8.500" cy="3.500" r="1.200" fill="#fff" />
          <ellipse cx="7" cy="5.800" rx="2" ry=".8" fill="#f7a51c" />
          <path d="M2 7C5 9 9 9 12 7V9C9 10.500 5 10.500 2 9Z" fill="#e5252a" />
          <path d="M2 15H6M8 15H12" stroke="#f7a51c" strokeWidth="1.600" />
        </svg>
      </span>
      <span className="flex w-6 justify-center">
        <span className="flex h-4 w-3 items-center justify-center rounded-full bg-[#0a7be8]"><Bluetooth size={10} /></span>
      </span>
      <span className="flex w-6 justify-center">
        <svg width="13" height="10" viewBox="0 0 13 10">
          <rect x="5" y="0" width="8" height="10" fill="#76b900" />
          <path d="M0 5C3 .5 8 1 10 5C8 9 3 9 0 5ZM3 5C4.500 3 6.500 3 7.500 5C6.500 7 4.500 7 3 5Z" fill="none" stroke="#3f6400" />
        </svg>
      </span>
      <span className="flex w-6 justify-center">
        <svg width="16" height="16" viewBox="0 0 16 16">
          <path d="M7 1L13 3V8C13 12 10 14 7 15C4 14 1 12 1 8V3Z" fill="#fff" />
          <path d="M7 1V15M1 7.500H13" stroke="#1e1e1e" />
          <circle cx="11.500" cy="11.500" r="4" fill="#17a04a" />
          <path d="M9.500 11.500L11 13L13.500 10" fill="none" stroke="#fff" />
        </svg>
      </span>
      <span className="flex w-6 justify-center"><ChromeIcon size={15} /></span>
      <span className="flex w-6 justify-center"><Globe size={16} strokeWidth={1.5} /></span>
      <span className="flex w-6 justify-center"><Volume2 size={16} strokeWidth={1.5} /></span>
      <span className="w-6 text-center text-[14px]">中</span>
      <time className="w-[70px] text-center text-[12px] leading-[19px]">14:28<br />2026/1/23</time>
      <button aria-label="通知" className="relative mr-[12px] ml-[12px] w-[28px] h-7">
        <svg width="28" height="28" viewBox="0 0 28 28">
          <path d="M4 4H20V17H11L7 20V17H4Z" fill="#fff" />
          <path d="M7 7.500H17M7 10.500H17M7 13.500H14" stroke="#1e1e1e" />
          <circle cx="19.500" cy="20" r="7.500" fill="#3a3a3a" stroke="#9a9a9a" />
        </svg>
        <span className="absolute left-[12px] top-[12px] w-[15px] text-center text-[11px] leading-4">1</span>
      </button>
    </div>
  </div>
);

const Watermark: React.FC = () => (
  <svg aria-hidden="true" className="pointer-events-none absolute inset-0 h-full w-full">
    <defs>
      <pattern id="mark" width="250" height="250" patternUnits="userSpaceOnUse">
        <text
          transform="translate(60 178) rotate(-34)"
          fontFamily="Liberation Sans, sans-serif"
          fontSize="36"
          fontWeight="bold"
          fill="rgba(255,255,255,.11)"
          stroke="rgba(40,40,40,.25)"
          strokeWidth="1"
        >
          EAHub.cn
        </text>
      </pattern>
    </defs>
    <rect width="100%" height="100%" fill="url(#mark)" />
  </svg>
);

const App: React.FC = () => {
  return (
    <div className={clsx('relative flex min-h-screen w-full flex-col overflow-hidden bg-[#f0f0f0] text-black', UI_FONT)}>
      <div className="flex">
        <Sidebar />
        <ChartWindow />
      </div>
      <Terminal />
      <StatusBar />
      <Taskbar />
      <Watermark />
    </div>
  );
};

export default App;
